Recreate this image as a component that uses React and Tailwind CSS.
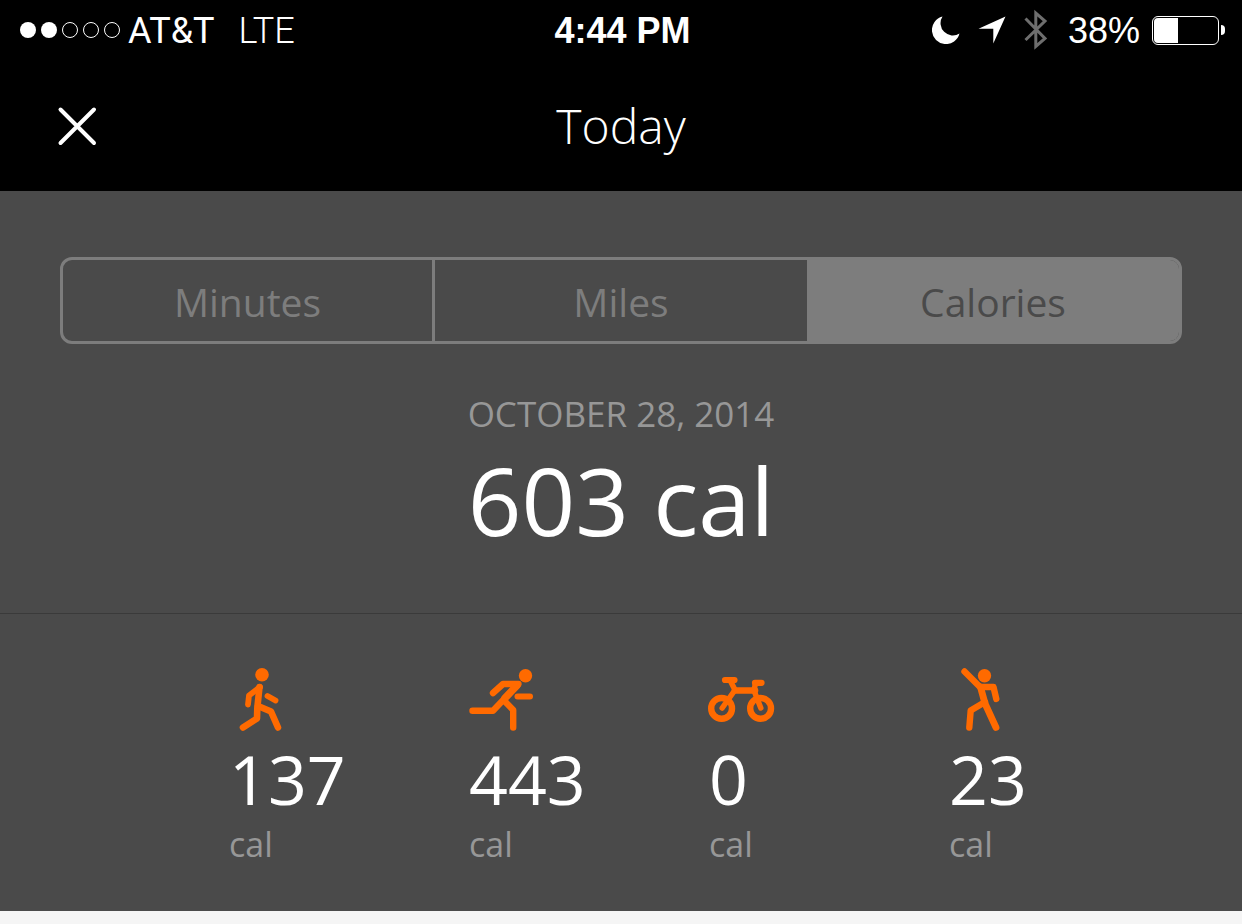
import { useState } from "react";

const ORANGE = "#ff6a00";

function SignalDots() {
  return (
    <div className="flex gap-[5px]" role="img" aria-label="Signal: 2 of 5">
      <span className="size-4 rounded-full bg-white" />
      <span className="size-4 rounded-full bg-white" />
      <span className="size-4 rounded-full border border-white" />
      <span className="size-4 rounded-full border border-white" />
      <span className="size-4 rounded-full border border-white" />
    </div>
  );
}

function MoonIcon() {
  return (
    <svg width="28" height="28" viewBox="0 0 28 28" fill="#fff" aria-hidden="true">
      <path d="M10.5 0.5A14 14 0 1 0 27.5 17.5A12.3 12.3 0 0 1 10.5 0.5Z" />
    </svg>
  );
}

function LocationIcon() {
  return (
    <svg width="28" height="28" viewBox="0 0 28 28" fill="#fff" aria-hidden="true">
      <path d="M27.5 0.5L15.3 27.5V12.7H0.5Z" />
    </svg>
  );
}

function BluetoothIcon() {
  return (
    <svg width="24" height="42" viewBox="0 0 24 42" fill="none" stroke="#6e6e6e" strokeWidth="3" aria-hidden="true">
      <path d="M1.5 9.5L21 29.5L11.8 37.5V4L21 12L1.5 31" />
    </svg>
  );
}

function BatteryIcon() {
  return (
    <div className="flex items-center gap-[2px]" role="img" aria-label="Battery 38%">
      <div className="h-[29px] w-[67px] rounded-md border border-white p-px">
        <div className="h-full w-[38%] rounded-l-[4px] bg-white" />
      </div>
      <div className="h-[10px] w-[4px] rounded-r-full bg-white" />
    </div>
  );
}

function WalkIcon() {
  return (
    <svg width="66" height="66" viewBox="0 0 66 66" fill="none" stroke={ORANGE} strokeWidth="6.6" strokeLinecap="round" strokeLinejoin="round" aria-hidden="true">
      <circle cx="33" cy="7.8" r="6.8" fill={ORANGE} stroke="none" />
      <path d="M31 20L20 28.5L19 37.5" strokeWidth="5.8" />
      <path d="M30.5 20L28.3 41L28 51.5L14 60.5" />
      <path d="M29 39L42 44.5L49 60.5" />
      <path d="M38.5 29L46.5 33.5" strokeWidth="5.8" />
    </svg>
  );
}

function RunIcon() {
  return (
    <svg width="66" height="66" viewBox="0 0 66 66" fill="none" stroke={ORANGE} strokeWidth="6.4" strokeLinecap="round" strokeLinejoin="round" aria-hidden="true">
      <circle cx="56.5" cy="8.7" r="6.7" fill={ORANGE} stroke="none" />
      <path d="M24 26L34 17H49.5L24 43.8H3.5" />
      <path d="M48 18.5L36 31" strokeWidth="7.4" />
      <path d="M35 33.5L44.2 43V60.5" />
      <path d="M48.5 29.5H61" strokeWidth="6" />
    </svg>
  );
}

function BikeIcon() {
  return (
    <svg width="66" height="66" viewBox="0 0 66 66" className="overflow-visible" fill="none" stroke={ORANGE} strokeWidth="5.5" strokeLinecap="round" strokeLinejoin="round" aria-hidden="true">
      <circle cx="12.6" cy="41.4" r="10.4" strokeWidth="6.4" />
      <circle cx="51.6" cy="41.4" r="10.4" strokeWidth="6.4" />
      <path d="M16 13H25.5" strokeWidth="6.2" />
      <path d="M21.5 14L26 23L13.2 41" />
      <path d="M26 23.5H46" strokeWidth="6.6" />
      <path d="M46 15.8H52.5" strokeWidth="6.2" />
      <path d="M46.5 16L45 23.5L51.8 41" />
    </svg>
  );
}

function DanceIcon() {
  return (
    <svg width="66" height="66" viewBox="0 0 66 66" fill="none" stroke={ORANGE} strokeWidth="6.4" strokeLinecap="round" strokeLinejoin="round" aria-hidden="true">
      <circle cx="35.5" cy="8.7" r="6.7" fill={ORANGE} stroke="none" />
      <path d="M15.5 4.5L31 20H44.5L47.3 32" />
      <path d="M31.5 20L36 36.5L47 60.5" strokeWidth="6.8" />
      <path d="M36 35L21.7 43.5L20.3 60.5" />
    </svg>
  );
}

const STATS = [
  { name: "Walking", value: "137", Icon: WalkIcon },
  { name: "Running", value: "443", Icon: RunIcon },
  { name: "Cycling", value: "0", Icon: BikeIcon },
  { name: "Dancing", value: "23", Icon: DanceIcon },
];

const TABS = ["Minutes", "Miles", "Calories"];

function tabClass(index, active) {
  if (TABS[index] === active) return "bg-[#7d7d7d] pt-[3px] text-[#4a4a4a]";
  const needsDivider = index < TABS.length - 1 && TABS[index + 1] !== active;
  return needsDivider ? "border-r-3 border-[#7d7d7d] pt-[3px] text-[#7d7d7d]" : "pt-[3px] text-[#7d7d7d]";
}

function StatusBar() {
  return (
    <div className="grid h-[60px] grid-cols-[1fr_auto_1fr] items-center pl-5 pr-[17px] text-4xl">
      <div className="flex items-center">
        <SignalDots />
        <span className="ml-2 pt-0.5 font-[Roboto,sans-serif]">AT&amp;T</span>
        <span className="ml-6 pt-0.5 font-[Roboto,sans-serif] font-light">LTE</span>
      </div>
      <span className="pt-0.5 font-['Liberation_Sans',sans-serif] font-bold">4:44 PM</span>
      <div className="flex items-center justify-end">
        <MoonIcon />
        <span className="ml-[18px]"><LocationIcon /></span>
        <span className="ml-[18px]"><BluetoothIcon /></span>
        <span className="ml-5 mr-3 pt-0.5 font-['Liberation_Sans',sans-serif]">38%</span>
        <BatteryIcon />
      </div>
    </div>
  );
}

export default function App() {
  const [active, setActive] = useState("Calories");
  return (
    <div className="min-h-screen bg-[#f5f5f5] font-['Open_Sans',sans-serif] text-white">
      <header className="bg-black">
        <StatusBar />
        <div className="grid h-[131px] grid-cols-[1fr_auto_1fr] items-center px-[57px]">
          <button type="button" aria-label="Close" className="size-10">
            <svg width="40" height="40" viewBox="0 0 40 40" stroke="#fff" strokeWidth="4" strokeLinecap="round" aria-hidden="true">
              <path d="M3.5 3.5L37 37M37 3.5L3.5 37" />
            </svg>
          </button>
          <h1 className="text-5xl font-light">Today</h1>
        </div>
      </header>

      <main className="bg-[#4a4a4a]">
        <section className="flex flex-col items-center border-b border-[#3a3a3a] px-[60px] pb-[63px] pt-[66px]">
          <div className="grid h-[87px] w-full grid-cols-3 overflow-hidden rounded-xl border-3 border-[#7d7d7d] bg-[#4a4a4a] text-[39px]">
            {TABS.map((tab, index) => (
              <button
                key={tab}
                type="button"
                aria-pressed={active === tab}
                onClick={() => setActive(tab)}
                className={tabClass(index, active)}
              >
                {tab}
              </button>
            ))}
          </div>
          <p className="mt-[50px] text-[35px] leading-10 text-[#979797]">OCTOBER 28, 2014</p>
          <p className="mt-4 text-[94px] leading-[100px]">603 cal</p>
        </section>

        <section className="grid grid-cols-4 pb-[47px] pl-[229px] pr-[53px] pt-[53px]">
          {STATS.map(({ name, value, Icon }) => (
            <div key={name} aria-label={name} className="flex flex-col items-start">
              <Icon />
              <p className="mt-2 text-[68px] leading-[76px]">{value}</p>
              <p className="mt-[7px] text-[34px] leading-10 text-[#979797]">cal</p>
            </div>
          ))}
        </section>
      </main>
    </div>
  );
}
